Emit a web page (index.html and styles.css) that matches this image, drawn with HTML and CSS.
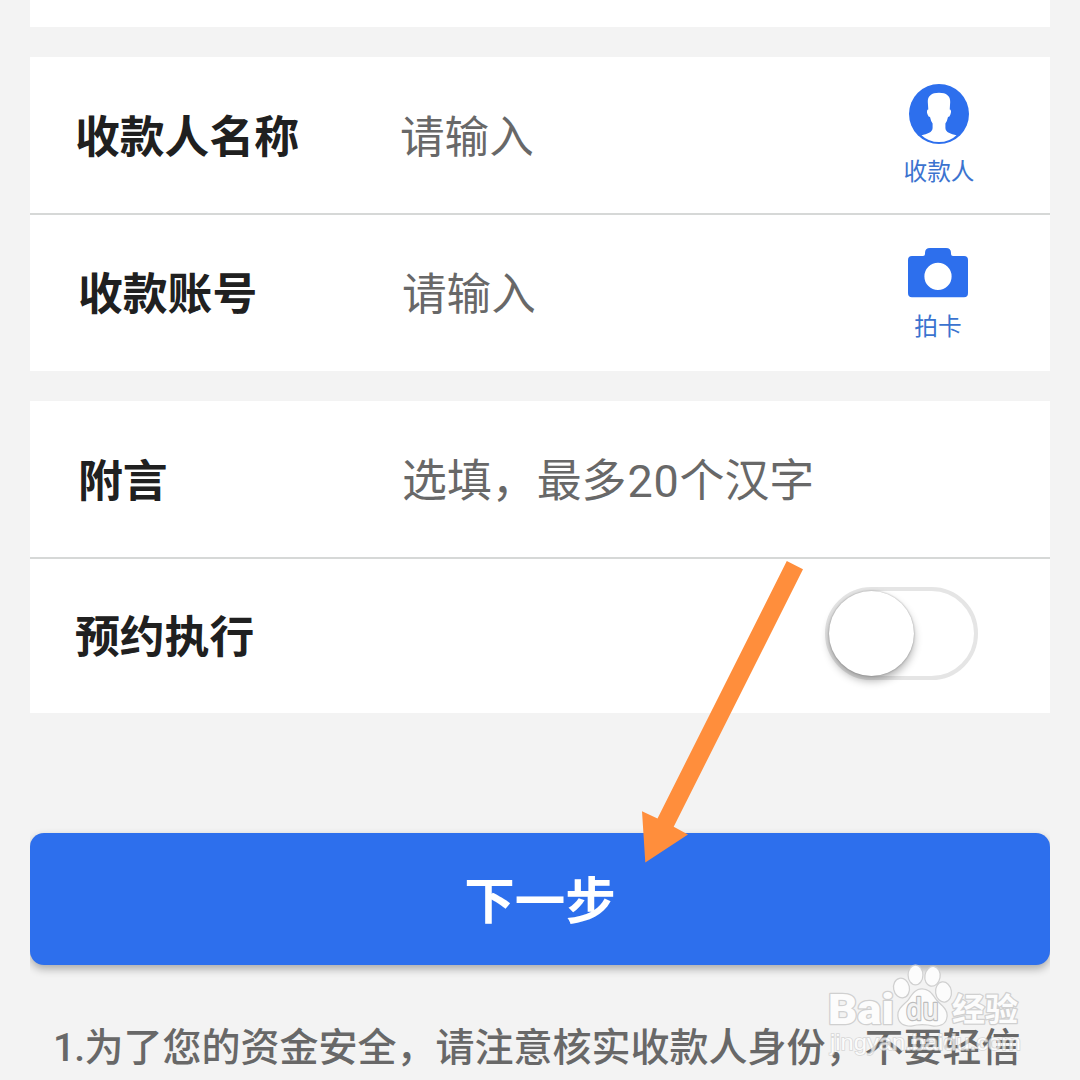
FILE: index.html
```html
<!DOCTYPE html>
<html lang="zh-CN">
<head>
<meta charset="utf-8">
<title>转账汇款</title>
<link rel="stylesheet" href="styles.css">
</head>
<body>
<main class="page">
  <section class="card card-previous"></section>
  <section class="card">
    <div class="row">
      <span class="label">收款人名称</span>
      <span class="hint">请输入</span>
      <div class="action">
        <svg class="icon-person" viewBox="0 0 60 60">
          <circle cx="30" cy="30" r="30" fill="#2d6fed"/>
          <path fill="#fff" d="M30 8.700C22.500 8.700 18.500 12 18.800 18L19.300 25.500C17.800 25.500 17.600 28 18.600 30.500Q19.400 33 21 33Q21.800 37 23.600 39.500V44C23.600 48.500 18 50 12.500 51.200Q19.500 58 30 58Q40.500 58 47.500 51.200C42 50 36.400 48.500 36.400 44V39.500Q38.200 37 39 33Q40.600 33 41.400 30.500C42.400 28 42.200 25.500 40.700 25.500L41.200 18C41.500 12 37.500 8.700 30 8.700Z"/>
        </svg>
        <span>收款人</span>
      </div>
    </div>
    <div class="row row-account">
      <span class="label">收款账号</span>
      <span class="hint">请输入</span>
      <div class="action">
        <svg class="icon-camera" viewBox="0 0 60 50">
          <path fill="#2d6fed" fill-rule="evenodd" d="M4 8H15Q17 8 17 6V5Q17 0 22 0H38Q43 0 43 5V6Q43 8 45 8H56Q60 8 60 12V45Q60 49.300 56 49.300H4Q0 49.300 0 45V12Q0 8 4 8ZM30 14.800A13.600 13.600 0 1 0 30 42A13.600 13.600 0 1 0 30 14.800Z"/>
        </svg>
        <span>拍卡</span>
      </div>
    </div>
  </section>
  <section class="card">
    <div class="row row-memo">
      <span class="label">附言</span>
      <span class="hint">选填，最多<span class="digits">20</span>个汉字</span>
    </div>
    <div class="row row-schedule">
      <span class="label">预约执行</span>
      <span class="switch"><span class="knob"></span></span>
    </div>
  </section>
  <div class="submit-wrap"><button class="submit">下一步</button></div>
  <p class="note"><span class="index">1.</span>为了您的资金安全，请注意核实收款人身份，不要轻信</p>

  <svg class="arrow" viewBox="0 0 170 310">
    <path fill="#ff8e3c" d="M156.800 1L173 9.200L43.700 266.800L58 274.500L15.300 302.500L12 251.300L27.500 258.500Z"/>
  </svg>

  <svg class="watermark" viewBox="0 0 220 100">
    <g class="mark">
      <text class="brand" x="8" y="63.500" textLength="66" lengthAdjust="spacingAndGlyphs">Bai</text>
      <ellipse cx="81.500" cy="28" rx="7.300" ry="9.300" transform="rotate(-12 81.500 28)"/>
      <ellipse cx="95.500" cy="15" rx="6.800" ry="9.300"/>
      <ellipse cx="112.500" cy="16.300" rx="7" ry="9.300" transform="rotate(10 112.500 16.300)"/>
      <ellipse cx="123.500" cy="32" rx="7.300" ry="9.500" transform="rotate(-8 123.500 32)"/>
      <path d="M102 29.500C96 29.500 93 34 89 40C85 45 78 48 78.500 56C79 63 84 65.500 91 65.500Q102 62.500 114 65.500C122 65.500 126 63 126.500 56C127 48 119 45 115 39C111 33 108 29.500 102 29.500Z"/>
      <text class="du" x="86" y="60" textLength="33" lengthAdjust="spacingAndGlyphs">du</text>
      <text class="cn" x="132" y="61" textLength="66" lengthAdjust="spacingAndGlyphs">经验</text>
    </g>
    <text class="site" x="10" y="90" textLength="191" lengthAdjust="spacingAndGlyphs">jingyan.baidu.com</text>
  </svg>
</main>
</body>
</html>
```
FILE: styles.css
```css
* { box-sizing: border-box; }
body {
  margin: 0;
  background: #f3f3f3;
  font-family: "Noto Sans CJK SC", sans-serif;
}
.page {
  position: relative;
  width: 1080px;
  height: 1080px;
  overflow: hidden;
  padding: 0 30px;
}
.card { background: #fff; margin-bottom: 30px; }
.card-previous { height: 27px; }
.row {
  display: grid;
  grid-template-columns: 325px 1fr 150px;
  align-items: center;
  height: 156px;
  padding: 0 36px 0 45px;
}
.row + .row { border-top: 2px solid #d6d8d7; height: 158px; }
.label {
  padding-bottom: 3px;
  font-size: 44.800px;
  line-height: 66px;
  font-weight: 700;
  color: #202020;
  white-space: nowrap;
}
.hint {
  padding-bottom: 3px;
  font-size: 44.600px;
  line-height: 66px;
  color: #686868;
  white-space: nowrap;
}
.digits {
  font-family: Roboto, sans-serif;
  line-height: 1;
  letter-spacing: .8px;
  margin-left: 1px;
}
.row-account, .row-memo {
  grid-template-columns: 324px 1fr 148px;
  padding-left: 48px;
}
.row-account { padding-right: 38px; }
.row-account .label, .row-account .hint { padding-bottom: 4px; }
.row-memo .hint { font-size: 44.900px; padding-bottom: 2px; }
.row.row-schedule {
  height: 156px;
  padding-right: 72px;
  grid-template-columns: 1fr auto;
}
.row-schedule .label { padding-bottom: 5px; }
.action {
  display: flex;
  flex-direction: column;
  align-items: center;
  font-size: 23.700px;
  line-height: 34px;
  color: #3b73cf;
}
.icon-person { width: 60px; height: 60px; margin: 0 0 9px; }
.icon-camera { width: 60px; height: 50px; margin: 3px 0 10px; }
.switch {
  width: 153px;
  height: 93px;
  border: 4px solid #e5e5e5;
  border-radius: 47px;
  margin-top: -6px;
}
.knob {
  display: block;
  width: 85px;
  height: 85px;
  border-radius: 50%;
  background: #fff;
  box-shadow: 0 0 2px rgba(0,0,0,.35), 0 5px 9px rgba(0,0,0,.3);
}
.submit-wrap {
  padding-top: 90px;
  height: 240px;
  overflow: hidden;
}
.submit {
  display: block;
  width: 100%;
  height: 132px;
  padding: 0 0 4px;
  border: 0;
  border-radius: 14px;
  background: #2d6fed;
  box-shadow: 0 4px 8px rgba(0,0,0,.3);
  color: #fff;
  font: 700 50.500px/128px "Noto Sans CJK SC", sans-serif;
}
.note {
  margin: 32px 0 0 23px;
  font-size: 39px;
  line-height: 58px;
  font-weight: 500;
  color: #686868;
  white-space: nowrap;
}
.index { font-family: Roboto, sans-serif; letter-spacing: -.8px; }
.arrow {
  position: absolute;
  left: 630px;
  top: 560px;
  width: 170px;
  height: 310px;
  overflow: visible;
}
.watermark {
  position: absolute;
  left: 820px;
  top: 960px;
  width: 220px;
  height: 100px;
}
.mark {
  fill: #fcfcfc;
  stroke: #d0d0d0;
  stroke-width: 2.500px;
  paint-order: stroke;
  stroke-linejoin: round;
}
.brand { font: 900 43px Roboto, sans-serif; }
.du { font: 600 30px "Open Sans", sans-serif; fill: #f2f2f2; stroke: #bdbdbd; }
.cn { font: 700 32px "Noto Sans CJK SC", sans-serif; }
.site {
  font: 400 22.500px "Liberation Sans", sans-serif;
  fill: #fff;
  stroke: #ccc;
  stroke-width: 1.500px;
  paint-order: stroke;
  opacity: .72;
}
```
